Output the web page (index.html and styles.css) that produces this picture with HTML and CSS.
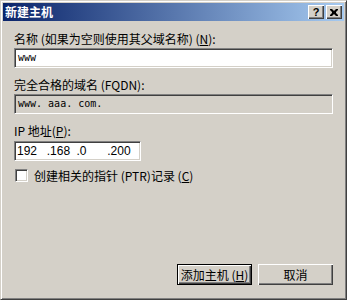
FILE: index.html
```html
<!DOCTYPE html>
<html lang="zh-CN">
<head>
    <meta charset="UTF-8">
    <title>新建主机</title>
    <link rel="stylesheet" href="styles.css">
</head>
<body>
    <div class="window">
        <div class="titlebar">
            <span class="title">新建主机</span>
            <div class="caption-buttons">
                <span class="cap-btn">?</span>
                <span class="cap-btn cap-close">
                    <svg width="8" height="7" viewBox="0 0 8 7"><path d="M0 0h2l2 2 2-2h2v1l-2 2v1l2 2v1h-2l-2-2-2 2h-2v-1l2-2v-1l-2-2z" fill="#000"/></svg>
                </span>
            </div>
        </div>
        <div class="content">
            <div class="label label-first">名称 (如果为空则使用其父域名称) (<u>N</u>):</div>
            <div class="field">www</div>
            <div class="label">完全合格的域名 (FQDN):</div>
            <div class="field field-disabled">www. aaa. com.</div>
            <div class="label">IP 地址(<u>P</u>):</div>
            <div class="field field-ip">
                <span class="oct">192</span><span class="oct">.168</span><span class="oct">.0</span><span class="oct">.200</span>
            </div>
            <div class="check-row">
                <span class="checkbox"></span>
                <span>创建相关的指针 (PTR)记录 (<u>C</u>)</span>
            </div>
            <div class="actions">
                <div class="btn btn-default"><span class="btn-inner">添加主机 (<u>H</u>)</span></div>
                <div class="btn"><span class="btn-inner">取消</span></div>
            </div>
        </div>
    </div>
</body>
</html>
```

FILE: styles.css
```css
body {
    margin: 0;
    font-family: "Noto Sans CJK SC", "DejaVu Sans", sans-serif;
    font-size: 12px;
    color: #000;
    background: #d4d0c8;
}
.window {
    width: 347px;
    height: 300px;
    box-sizing: border-box;
    border: 1px solid;
    border-color: #d4d0c8 #404040 #404040 #d4d0c8;
    box-shadow: inset 1px 1px #fff, inset -1px -1px #808080;
    padding: 2px;
    background: #d4d0c8;
    display: flex;
    flex-direction: column;
}
.titlebar {
    height: 18px;
    background: linear-gradient(to right, #0a246a, #a6caf0);
    display: flex;
    align-items: center;
    justify-content: space-between;
    padding: 0 2px;
}
.title {
    color: #fff;
    font-weight: bold;
    font-size: 12px;
    line-height: 18px;
}
.caption-buttons {
    display: flex;
    gap: 2px;
}
.cap-btn {
    width: 16px;
    height: 14px;
    box-sizing: border-box;
    background: #d4d0c8;
    box-shadow: inset 1px 1px #fff, inset -1px -1px #404040, inset -2px -2px #808080;
    display: flex;
    align-items: center;
    justify-content: center;
    font-family: "Liberation Sans", sans-serif;
    font-weight: bold;
    font-size: 11px;
    line-height: 14px;
}
.content {
    flex: 1;
    display: flex;
    flex-direction: column;
    padding: 0 11px 12px 11px;
}
.label {
    height: 13px;
    line-height: 13px;
    margin-top: 10px;
    margin-bottom: 3px;
    white-space: nowrap;
}
.label-first {
    margin-top: 11px;
}
.field {
    height: 20px;
    box-sizing: border-box;
    background: #fff;
    border: 1px solid;
    border-color: #808080 #fff #fff #808080;
    box-shadow: inset 1px 1px #404040, inset -1px -1px #d4d0c8;
    padding: 0 3px;
    line-height: 18px;
    font-family: "DejaVu Sans Mono", monospace;
    font-size: 10px;
}
.field-disabled {
    background: #d4d0c8;
}
.field-ip {
    width: 127px;
    margin-top: 1px;
    display: flex;
    font-family: "Liberation Sans", sans-serif;
    font-size: 12px;
    padding-left: 2px;
}
.oct {
    width: 32px;
}
.oct:nth-child(3) {
    width: 33px;
}
.check-row {
    display: flex;
    align-items: center;
    gap: 6px;
    margin-top: 8px;
    height: 13px;
    padding-left: 1px;
}
.checkbox {
    width: 13px;
    height: 13px;
    box-sizing: border-box;
    background: #fff;
    border: 1px solid;
    border-color: #808080 #fff #fff #808080;
    box-shadow: inset 1px 1px #404040, inset -1px -1px #d4d0c8;
}
.actions {
    margin-top: auto;
    display: flex;
    justify-content: flex-end;
    gap: 6px;
}
.btn {
    width: 75px;
    height: 21px;
    box-sizing: border-box;
    background: #d4d0c8;
    box-shadow: inset 1px 1px #fff, inset -1px -1px #404040, inset -2px -2px #808080;
    display: flex;
}
.btn-default {
    border: 1px solid #000;
}
.btn-inner {
    flex: 1;
    display: flex;
    align-items: center;
    justify-content: center;
    line-height: 13px;
}
```
